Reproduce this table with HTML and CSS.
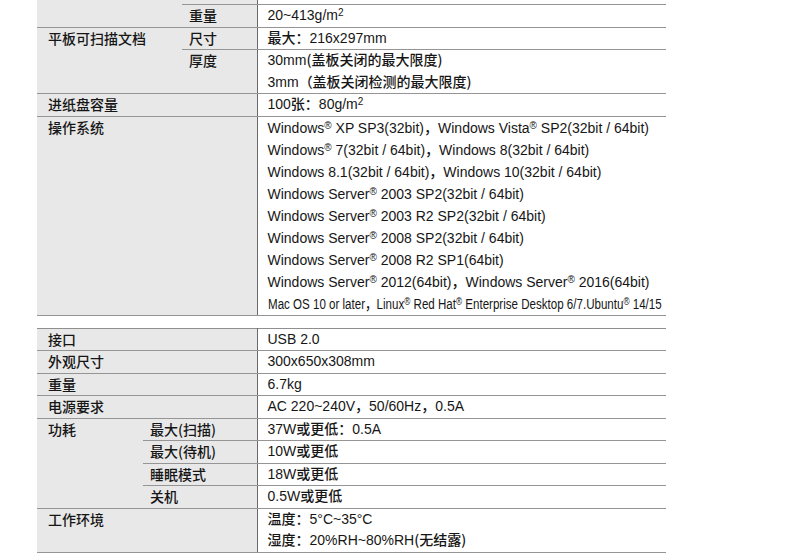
FILE: index.html
```html
<!DOCTYPE html>
<html lang="zh-CN">
<head>
<meta charset="utf-8">
<title>规格</title>
<link rel="stylesheet" href="styles.css">
</head>
<body>
<div class="page">
  <table class="spec spec-a">
    <colgroup><col class="ca-label"><col class="ca-sub"><col class="c-val"></colgroup>
    <tr class="stub"><td class="label" rowspan="2"></td><td class="sub"></td><td class="val"></td></tr>
    <tr><td class="sub">重量</td><td class="val">20~413g/m<sup class="pw">2</sup></td></tr>
    <tr><td class="label" rowspan="2">平板可扫描文档</td><td class="sub">尺寸</td><td class="val"><span class="zh">最大：</span>216x297mm</td></tr>
    <tr><td class="sub">厚度</td><td class="val">30mm<span class="zh">(盖板关闭的最大限度)</span><br>3mm<span class="zh">（盖板关闭检测的最大限度)</span></td></tr>
    <tr><td class="label" colspan="2">进纸盘容量</td><td class="val">100<span class="zh">张：</span>80g/m<sup class="pw">2</sup></td></tr>
    <tr class="os"><td class="label" colspan="2">操作系统</td><td class="val">
      Windows<sup>®</sup> XP SP3(32bit)<span class="zh">，</span>Windows Vista<sup>®</sup> SP2(32bit / 64bit)<br>
      Windows<sup>®</sup> 7(32bit / 64bit)<span class="zh">，</span>Windows 8(32bit / 64bit)<br>
      Windows 8.1(32bit / 64bit)<span class="zh">，</span>Windows 10(32bit / 64bit)<br>
      Windows Server<sup>®</sup> 2003 SP2(32bit / 64bit)<br>
      Windows Server<sup>®</sup> 2003 R2 SP2(32bit / 64bit)<br>
      Windows Server<sup>®</sup> 2008 SP2(32bit / 64bit)<br>
      Windows Server<sup>®</sup> 2008 R2 SP1(64bit)<br>
      Windows Server<sup>®</sup> 2012(64bit)<span class="zh">，</span>Windows Server<sup>®</sup> 2016(64bit)<br>
      <span class="narrow">Mac OS 10 or later<span class="zh">，</span>Linux<sup>®</sup> Red Hat<sup>®</sup> Enterprise Desktop 6/7.Ubuntu<sup>®</sup> 14/15</span>
    </td></tr>
  </table>

  <table class="spec spec-b">
    <colgroup><col class="cb-label"><col class="cb-sub"><col class="c-val"></colgroup>
    <tr><td class="label" colspan="2">接口</td><td class="val">USB 2.0</td></tr>
    <tr><td class="label" colspan="2">外观尺寸</td><td class="val">300x650x308mm</td></tr>
    <tr><td class="label" colspan="2">重量</td><td class="val">6.7kg</td></tr>
    <tr><td class="label" colspan="2">电源要求</td><td class="val">AC 220~240V<span class="zh">，</span>50/60Hz<span class="zh">，</span>0.5A</td></tr>
    <tr><td class="label" rowspan="4">功耗</td><td class="sub">最大(扫描)</td><td class="val">37W<span class="zh">或更低：</span>0.5A</td></tr>
    <tr><td class="sub">最大(待机)</td><td class="val">10W<span class="zh">或更低</span></td></tr>
    <tr><td class="sub">睡眠模式</td><td class="val">18W<span class="zh">或更低</span></td></tr>
    <tr><td class="sub">关机</td><td class="val">0.5W<span class="zh">或更低</span></td></tr>
    <tr><td class="label" colspan="2">工作环境</td><td class="val"><span class="zh">温度：</span>5°C~35°C<br><span class="zh">湿度：</span>20%RH~80%RH<span class="zh">(无结露)</span></td></tr>
  </table>
</div>
</body>
</html>
```

FILE: styles.css
```css
html, body {
  margin: 0;
  padding: 0;
  background: #ffffff;
}

.page {
  padding-left: 37px;
  font-family: "Liberation Sans", "Noto Sans CJK SC", sans-serif;
  font-size: 14px;
  color: #161616;
}

.spec {
  border-collapse: collapse;
  table-layout: fixed;
  width: 629px;
}

.spec-b {
  margin-top: 12px;
  border-top: 1px solid #8f8f8f;
}

.ca-label { width: 145px; }
.ca-sub { width: 75px; }
.cb-label { width: 106px; }
.cb-sub { width: 114px; }
.c-val { width: 409px; }

.spec td {
  padding: 0;
  line-height: 21.5px;
  vertical-align: top;
  border-bottom: 1px solid #959595;
  white-space: nowrap;
}

.spec .stub td {
  height: 4px;
  line-height: 4px;
}

.label,
.sub {
  background: #e8e8e8;
  font-family: "Noto Sans CJK SC", sans-serif;
  font-weight: 500;
  color: #161616;
}

.label { padding-left: 11px !important; }
.sub { padding-left: 7px !important; }

.val {
  padding-left: 10px !important;
  border-left: 1px solid #6a6a6a;
}

.os .val { line-height: 22px; }

.zh {
  font-family: "Noto Sans CJK SC", sans-serif;
  font-weight: 500;
  line-height: 1;
}

sup {
  font-size: 10px;
  line-height: 0;
  vertical-align: 4px;
}

.narrow {
  display: inline-block;
  font-size: 14px;
  line-height: 1;
  transform: scaleX(0.826);
  transform-origin: left center;
}
```
